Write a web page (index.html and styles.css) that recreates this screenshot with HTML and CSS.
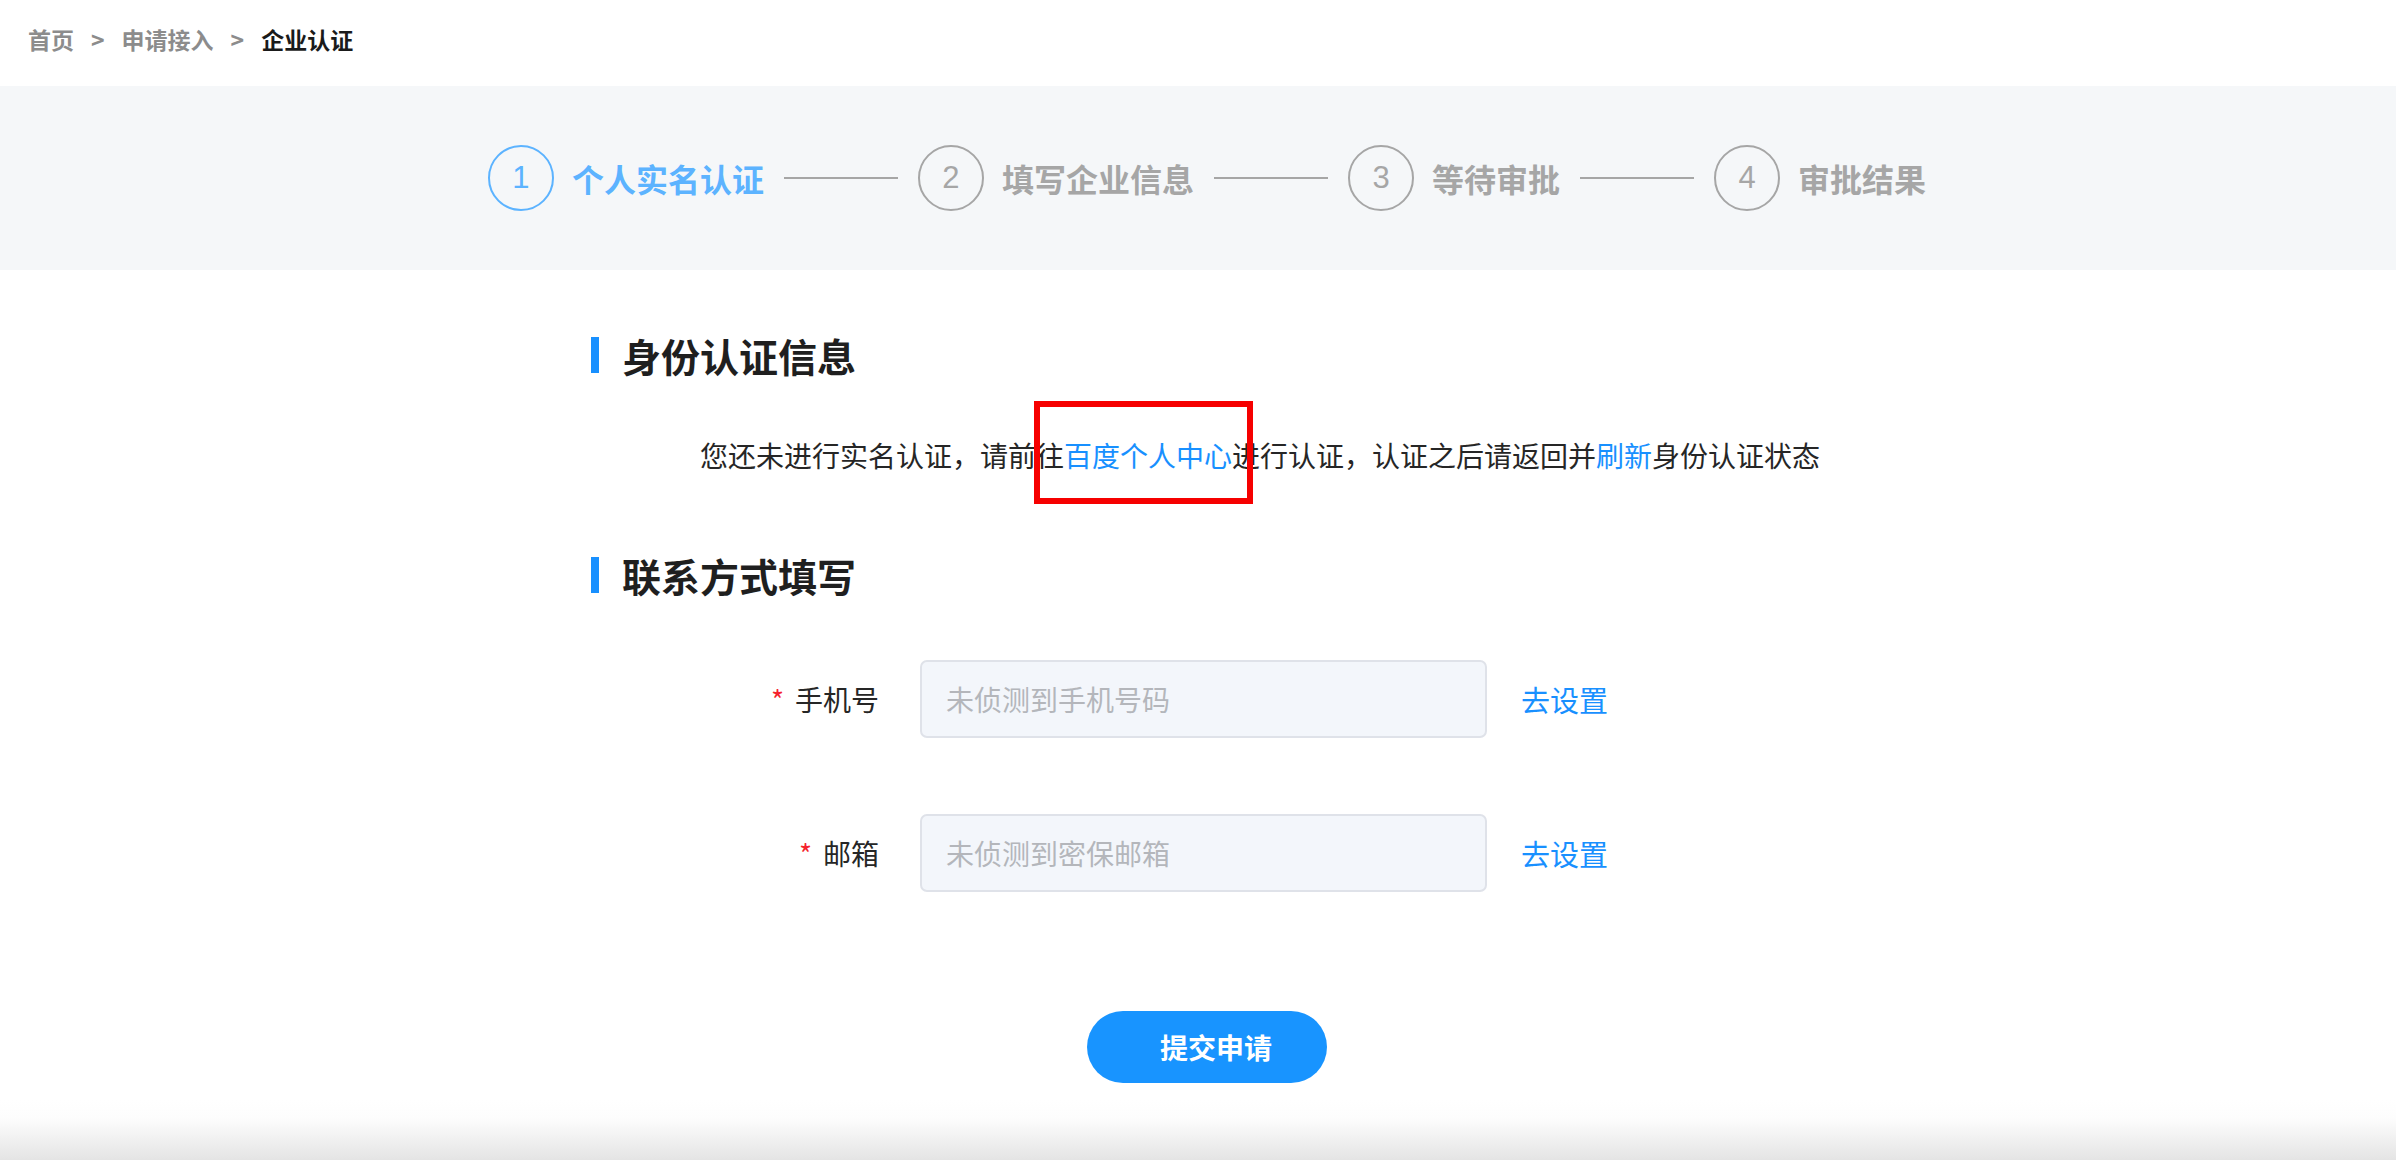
FILE: index.html
```html
<!DOCTYPE html>
<html lang="zh-CN">
<head>
    <meta charset="UTF-8">
    <meta name="viewport" content="width=device-width, initial-scale=1.0">
    <title>企业认证</title>
    <link rel="stylesheet" href="styles.css">
</head>
<body>
    <!-- Breadcrumb -->
    <div class="breadcrumb">
        <span class="crumb">首页</span>
        <span class="crumb-sep">&gt;</span>
        <span class="crumb">申请接入</span>
        <span class="crumb-sep">&gt;</span>
        <span class="crumb current">企业认证</span>
    </div>

    <!-- Steps -->
    <div class="steps-band">
        <div class="steps">
            <div class="step active">
                <span class="step-num">1</span>
                <span class="step-text">个人实名认证</span>
            </div>
            <div class="step-line"></div>
            <div class="step">
                <span class="step-num">2</span>
                <span class="step-text">填写企业信息</span>
            </div>
            <div class="step-line"></div>
            <div class="step">
                <span class="step-num">3</span>
                <span class="step-text">等待审批</span>
            </div>
            <div class="step-line"></div>
            <div class="step">
                <span class="step-num">4</span>
                <span class="step-text">审批结果</span>
            </div>
        </div>
    </div>

    <!-- Content -->
    <div class="page-body">
        <div class="main">
            <div class="section-title">
                <span class="title-bar"></span>
                <h2>身份认证信息</h2>
            </div>
            <p class="notice">
                您还未进行实名认证，请前往<a class="link" href="#">百度个人中心</a>进行认证，认证之后请返回并<a class="link" href="#">刷新</a>身份认证状态
                <span class="mark"></span>
            </p>

            <div class="section-title second">
                <span class="title-bar"></span>
                <h2>联系方式填写</h2>
            </div>

            <div class="form">
                <div class="form-row">
                    <label class="form-label"><span class="required">*</span>手机号</label>
                    <input class="form-input" type="text" placeholder="未侦测到手机号码" readonly>
                    <a class="link set-link" href="#">去设置</a>
                </div>
                <div class="form-row">
                    <label class="form-label"><span class="required">*</span>邮箱</label>
                    <input class="form-input" type="text" placeholder="未侦测到密保邮箱" readonly>
                    <a class="link set-link" href="#">去设置</a>
                </div>
            </div>

            <div class="actions">
                <button class="submit-btn" type="button">提交申请</button>
            </div>
        </div>
    </div>

    <div class="bottom-shade"></div>
</body>
</html>
```

FILE: styles.css
```css
body {
    margin: 0;
    padding: 0;
    font-family: "Noto Sans CJK SC", "Noto Sans", sans-serif;
    background: #fff;
    color: #333;
}

/* Breadcrumb */
.breadcrumb {
    display: flex;
    align-items: center;
    height: 86px;
    padding: 0 28px 8px;
    box-sizing: border-box;
    font-size: 23px;
    font-weight: bold;
    color: #8c8c8c;
}

.crumb-sep {
    margin: 0 17px;
}

.crumb.current {
    color: #1a1a1a;
}

/* Step band */
.steps-band {
    display: flex;
    justify-content: center;
    align-items: center;
    height: 184px;
    padding-left: 18px;
    background: #f5f7f9;
}

.steps {
    display: flex;
    align-items: center;
}

.step {
    display: flex;
    align-items: center;
    gap: 18px;
    color: #a6a6a6;
}

.step-num {
    display: flex;
    align-items: center;
    justify-content: center;
    width: 66px;
    height: 66px;
    box-sizing: border-box;
    border: 2px solid #a6a6a6;
    border-radius: 50%;
    font-family: "Liberation Sans", Roboto, sans-serif;
    font-size: 31px;
    font-weight: 300;
}

.step-text {
    font-size: 32px;
    font-weight: bold;
    line-height: 40px;
}

.step.active {
    color: #5cb3ff;
}

.step.active .step-num {
    border-color: #5cb3ff;
}

.step-line {
    width: 114px;
    height: 2px;
    margin: 0 20px;
    background: #a6a6a6;
}

/* Main content */
.page-body {
    padding-left: 18px;
}

.main {
    width: 1232px;
    margin: 0 auto;
}

.section-title {
    display: flex;
    align-items: center;
    height: 36px;
    margin-top: 67px;
}

.section-title.second {
    margin-top: 82px;
}

.title-bar {
    width: 8px;
    height: 36px;
    background: #1890ff;
    margin-right: 23px;
}

.section-title h2 {
    margin: 0;
    font-size: 39px;
    line-height: 36px;
    font-weight: bold;
    color: #1f1f1f;
}

.notice {
    position: relative;
    margin: 62px 0 0;
    padding-left: 109px;
    font-size: 28px;
    line-height: 40px;
    color: #262626;
    white-space: nowrap;
}

.link {
    color: #1890ff;
    text-decoration: none;
}

/* red annotation box */
.mark {
    position: absolute;
    left: 443px;
    top: -34px;
    width: 219px;
    height: 103px;
    box-sizing: border-box;
    border: 6px solid #f60000;
}

/* Form */
.form {
    display: flex;
    flex-direction: column;
    gap: 76px;
    margin-top: 67px;
}

.form-row {
    display: flex;
    align-items: center;
}

.form-label {
    width: 288px;
    margin-right: 41px;
    text-align: right;
    font-size: 28px;
    color: #262626;
}

.required {
    color: #f5222d;
    margin-right: 11px;
}

.form-input {
    width: 567px;
    height: 78px;
    box-sizing: border-box;
    padding: 0 24px;
    border: 2px solid #dfe2e9;
    border-radius: 7px;
    background: #f3f6fb;
    font-family: "Noto Sans CJK SC", sans-serif;
    font-size: 28px;
    color: #333;
    outline: none;
}

.form-input::placeholder {
    color: #b4b6bb;
}

.set-link {
    margin-left: 34px;
    font-size: 29px;
}

/* Submit */
.actions {
    display: flex;
    justify-content: center;
    margin-top: 119px;
}

.submit-btn {
    width: 240px;
    height: 72px;
    padding: 0 0 0 18px;
    border: none;
    border-radius: 36px;
    background: #1894ff;
    color: #fff;
    font-family: "Noto Sans CJK SC", sans-serif;
    font-size: 28px;
    font-weight: bold;
    cursor: pointer;
}

.bottom-shade {
    height: 60px;
    margin-top: 17px;
    background: linear-gradient(#fff, #fdfdfd 30%, #e4e4e4);
}
```
